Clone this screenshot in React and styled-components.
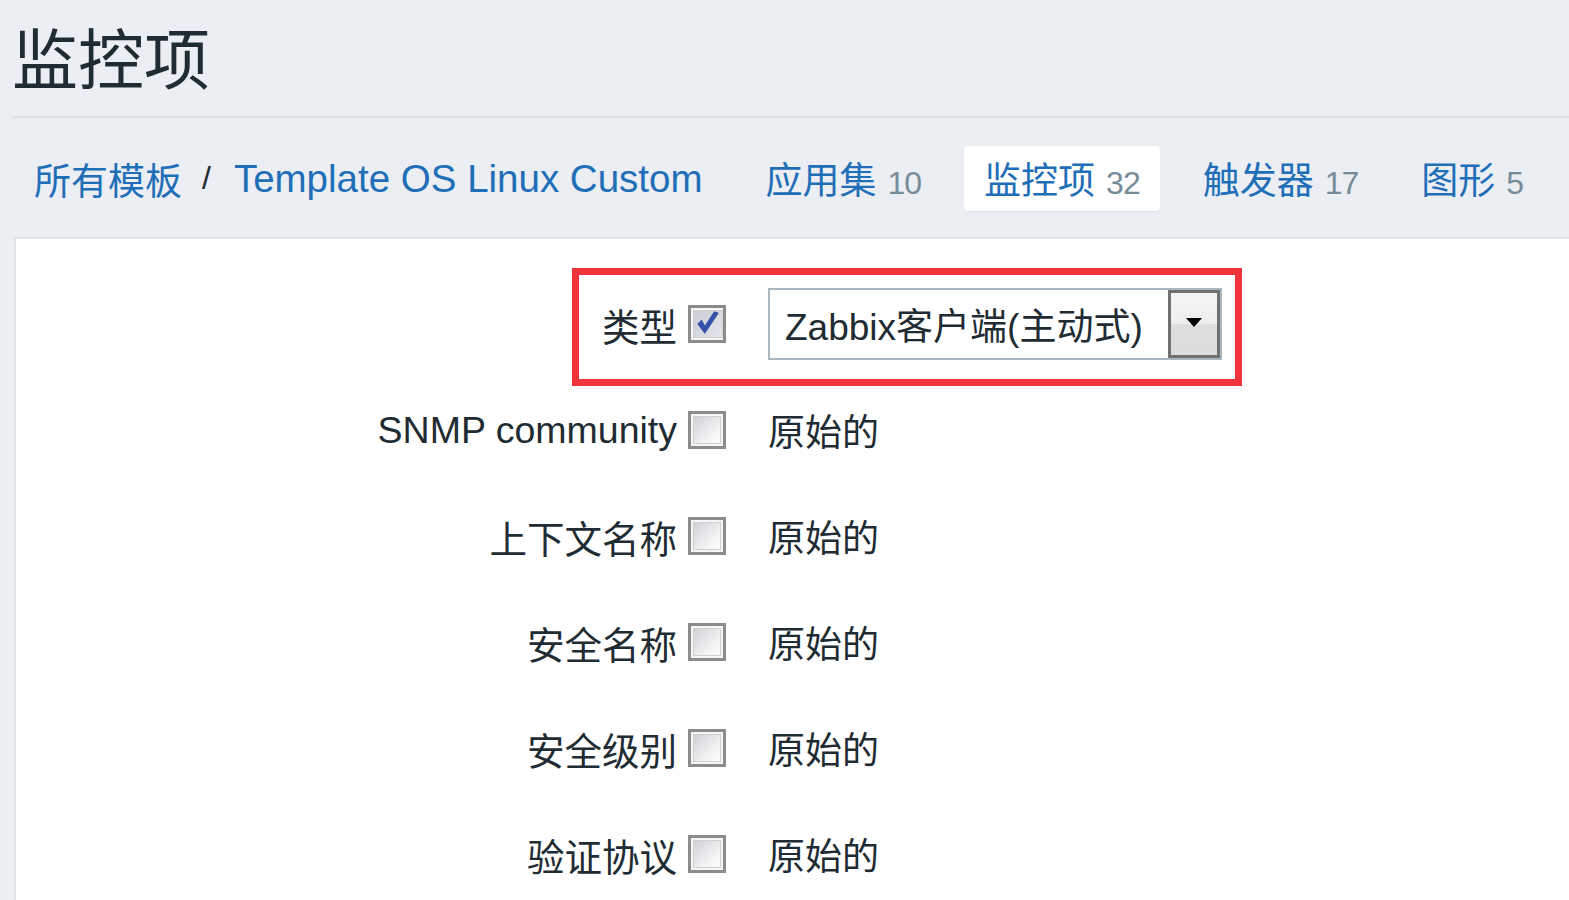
import React from "react";
import styled, { createGlobalStyle } from "styled-components";

const Global = createGlobalStyle`
  html, body { margin: 0; padding: 0; }
  body {
    background: #ebeef2;
    font-family: "Liberation Sans", "Noto Sans CJK SC", sans-serif;
    overflow: hidden;
    width: 1569px;
    height: 900px;
  }
`;

const Page = styled.div`
  width: 1569px;
  height: 900px;
  display: flex;
  flex-direction: column;
`;

const Header = styled.header`
  padding: 22px 0 0 12px;
`;

const Title = styled.h1`
  margin: 0;
  font-family: "Noto Sans CJK SC", sans-serif;
  font-weight: 400;
  font-size: 66px;
  line-height: 66px;
  height: 94px;
  color: #1f2c33;
`;

const Rule = styled.div`
  height: 2px;
  background: #dde2e6;
  margin-left: 12px;
`;

const Nav = styled.nav`
  display: flex;
  align-items: center;
  height: 119px;
  padding: 2px 0 0 34px;
  box-sizing: border-box;
`;

const Crumbs = styled.div`
  display: flex;
  align-items: center;
  font-size: 37px;
  color: #1f6fb8;
`;

const CrumbLink = styled.span`
  color: #1f6fb8;
  font-size: ${(p) => (p.$latin ? "38.5px" : "37px")};
`;

const CrumbSep = styled.span`
  color: #1f2c33;
  font-size: 32px;
  margin: 0 23px 0 20px;
`;

const Tabs = styled.div`
  display: flex;
  align-items: center;
  gap: 23px;
  margin-left: 43px;
`;

const Tab = styled.div`
  display: flex;
  align-items: baseline;
  height: 65px;
  box-sizing: border-box;
  padding: 10px 20px 0 20px;
  border-radius: 4px;
  background: ${(p) => (p.$active ? "#ffffff" : "transparent")};
  box-shadow: ${(p) => (p.$active ? "0 1px 2px rgba(0,0,0,0.06)" : "none")};
`;

const TabName = styled.span`
  font-family: "Noto Sans CJK SC", sans-serif;
  font-size: 37px;
  line-height: 45px;
  color: #1f6fb8;
`;

const TabCount = styled.span`
  font-size: 32px;
  letter-spacing: -1px;
  color: #768d99;
  margin-left: 11px;
`;

const Panel = styled.main`
  flex: 1;
  margin-left: 14px;
  background: #ffffff;
  border-top: 2px solid #dfe4e8;
  border-left: 2px solid #dfe4e8;
`;

const Form = styled.div`
  display: grid;
  row-gap: 34px;
  padding-top: 49px;
`;

const Row = styled.div`
  position: relative;
  display: flex;
  align-items: center;
  min-height: 72px;
`;

const Label = styled.div`
  width: 661px;
  text-align: right;
  font-size: 37.5px;
  color: #1f2c33;
  white-space: nowrap;
`;

const Box = styled.span`
  margin-left: 11px;
  width: 38px;
  height: 38px;
  box-sizing: border-box;
  border: 3px solid #8c8c8c;
  padding: 2px;
  background: #f6f6f6;
  display: flex;
`;

const BoxInner = styled.span`
  flex: 1;
  border: 1px solid #d0d0d0;
  background: ${(p) =>
    p.$checked
      ? "linear-gradient(135deg, #c9ccd6 0%, #e4e6ec 100%)"
      : "linear-gradient(135deg, #cfd1d6 0%, #f4f4f5 70%, #ffffff 100%)"};
  display: flex;
  align-items: center;
  justify-content: center;
`;

const Value = styled.div`
  margin-left: 42px;
  font-size: 37px;
  color: #1f2c33;
`;

const Select = styled.div`
  margin-left: 42px;
  width: 454px;
  height: 72px;
  box-sizing: border-box;
  border: 2px solid #aab6c0;
  background: #ffffff;
  display: flex;
  align-items: stretch;
`;

const SelectText = styled.div`
  flex: 1;
  display: flex;
  align-items: center;
  padding-left: 15px;
  font-size: 37px;
  color: #1f2c33;
  white-space: nowrap;
`;

const SelectButton = styled.div`
  width: 52px;
  box-sizing: border-box;
  border: 3px solid #707070;
  background: linear-gradient(#f5f5f5 0%, #ededed 50%, #dedede 50%, #dcdcdc 100%);
  display: flex;
  align-items: center;
  justify-content: center;
`;

const Arrow = styled.span`
  width: 0;
  height: 0;
  border-left: 8px solid transparent;
  border-right: 8px solid transparent;
  border-top: 9px solid #000;
  margin-top: -4px;
`;

const Highlight = styled.div`
  position: absolute;
  left: 556px;
  top: -20px;
  width: 670px;
  height: 118px;
  box-sizing: border-box;
  border: 7px solid #f2353d;
  pointer-events: none;
`;

const Check = () => (
  <svg width="28" height="28" viewBox="0 0 26 26">
    <path
      d="M4 13 L10 21 L22 3 L19 2 L10 16 L7 10 Z"
      fill="#3452a8"
      stroke="#3452a8"
      strokeWidth="1.5"
      strokeLinejoin="round"
    />
  </svg>
);

const Checkbox = ({ checked }) => (
  <Box>
    <BoxInner $checked={checked}>{checked && <Check />}</BoxInner>
  </Box>
);

const tabs = [
  { name: "应用集", count: 10 },
  { name: "监控项", count: 32, active: true },
  { name: "触发器", count: 17 },
  { name: "图形", count: 5 },
];

const rows = [
  "SNMP community",
  "上下文名称",
  "安全名称",
  "安全级别",
  "验证协议",
];

export default function App() {
  return (
    <>
      <Global />
      <Page>
        <Header>
          <Title>监控项</Title>
        </Header>
        <Rule />
        <Nav>
          <Crumbs>
            <CrumbLink>所有模板</CrumbLink>
            <CrumbSep>/</CrumbSep>
            <CrumbLink $latin>Template OS Linux Custom</CrumbLink>
          </Crumbs>
          <Tabs>
            {tabs.map((t) => (
              <Tab key={t.name} $active={t.active}>
                <TabName>{t.name}</TabName>
                <TabCount>{t.count}</TabCount>
              </Tab>
            ))}
          </Tabs>
        </Nav>
        <Panel>
          <Form>
            <Row>
              <Label>类型</Label>
              <Checkbox checked />
              <Select>
                <SelectText>Zabbix客户端(主动式)</SelectText>
                <SelectButton>
                  <Arrow />
                </SelectButton>
              </Select>
              <Highlight />
            </Row>
            {rows.map((r) => (
              <Row key={r}>
                <Label>{r}</Label>
                <Checkbox />
                <Value>原始的</Value>
              </Row>
            ))}
          </Form>
        </Panel>
      </Page>
    </>
  );
}
